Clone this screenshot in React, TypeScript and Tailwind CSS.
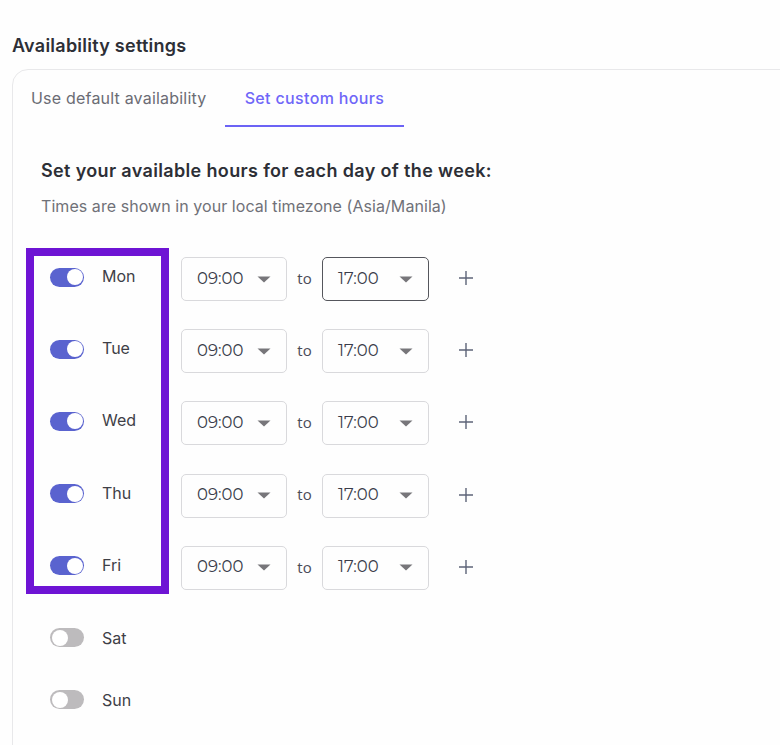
import React from "react";

function Toggle({ on }: { on: boolean }) {
  return on ? (
    <div className="flex h-[19px] w-[34px] items-center justify-end rounded-full bg-[#5a63cf] pr-[1.5px]">
      <div className="h-[16px] w-[16px] rounded-full bg-white" />
    </div>
  ) : (
    <div className="flex h-[19px] w-[34px] items-center justify-start rounded-full bg-[#bdbbbd] pl-[1.5px]">
      <div className="h-[16px] w-[16px] rounded-full bg-white" />
    </div>
  );
}

function Select({ value, focused, wide }: { value: string; focused?: boolean; wide?: boolean }) {
  return (
    <div
      className={
        "flex h-[44px] items-center justify-between rounded-[5px] border pl-[15px] pr-[15px] text-[16.5px] text-[#3a3d4a] " +
        (wide ? "w-[107px] " : "w-[106px] ") +
        (focused ? "border-[#55565c]" : "border-[#d9d9dc]")
      }
      style={{ fontFamily: '"Montserrat", "Open Sans", "Liberation Sans", sans-serif' }}
    >
      <span className="-translate-y-[1px]">{value}</span>
      <svg width="14" height="7" viewBox="0 0 14 7" className="shrink-0">
        <path d="M0.5 0.5h13L7 6.5z" fill="#77767a" />
      </svg>
    </div>
  );
}

function Plus() {
  return (
    <svg width="14" height="14" viewBox="0 0 14 14" className="ml-[30px] shrink-0 -translate-y-[1px]">
      <path d="M7 0v14M0 7h14" stroke="#5d6478" strokeWidth="1.4" />
    </svg>
  );
}

const days: { name: string; on: boolean }[] = [
  { name: "Mon", on: true },
  { name: "Tue", on: true },
  { name: "Wed", on: true },
  { name: "Thu", on: true },
  { name: "Fri", on: true },
];

export default function App() {
  return (
    <div
      className="relative h-[745px] w-[780px] overflow-hidden bg-[#fefefe] pl-3 pt-[35px]"
      style={{ fontFamily: '"Inter", "Liberation Sans", sans-serif' }}
    >
      <h2 className="text-[18px] font-semibold leading-[22px] tracking-[0.25px] text-[#2d2f36]">Availability settings</h2>
      <div className="mt-[12px] h-[800px] w-[900px] rounded-tl-2xl border border-[#e8e8ea]">
        <div className="flex h-[57px] items-stretch text-[16px]">
          <div className="flex w-[212px] items-center pb-[1px] pl-[18px] tracking-[0.2px] text-[#6b6c74]">
            Use default availability
          </div>
          <div className="flex w-[179px] items-center justify-center border-b-2 border-[#6c63f5] font-medium tracking-[0.35px] text-[#6f66f8]">
            Set custom hours
          </div>
        </div>
        <div className="pl-[28px] pt-[32px]">
          <h3 className="text-[18px] font-semibold leading-[24px] tracking-[0.35px] text-[#2d2f36]">
            Set your available hours for each day of the week:
          </h3>
          <p className="mt-[12px] text-[16px] leading-[22px] tracking-[0.06px] text-[#707178]">
            Times are shown in your local timezone (Asia/Manila)
          </p>
          <div className="mt-[40px] flex flex-col gap-[28.2px]">
            {days.map((d, i) => (
              <div key={d.name} className="flex h-[44px] items-center">
                <div className="flex w-[140px] shrink-0 -translate-y-[2px] items-center pl-[9px]">
                  <Toggle on={d.on} />
                  <span className="ml-[18px] -translate-y-[1px] text-[16px] text-[#3e3f47]">{d.name}</span>
                </div>
                <Select value="09:00" />
                <span
                  className="w-[35px] -translate-y-[1px] text-center text-[15px] text-[#4a4c58]"
                  style={{ fontFamily: '"Open Sans", sans-serif' }}
                >
                  to
                </span>
                <Select value="17:00" focused={i === 0} wide />
                <Plus />
              </div>
            ))}
          </div>
          <div className="mt-[36px] flex h-[24px] items-center pl-[9px]">
            <Toggle on={false} />
            <span className="ml-[18px] text-[16px] text-[#3e3f47]">Sat</span>
          </div>
          <div className="mt-[38px] flex h-[24px] items-center pl-[9px]">
            <Toggle on={false} />
            <span className="ml-[18px] text-[16px] text-[#3e3f47]">Sun</span>
          </div>
        </div>
      </div>
      <div className="pointer-events-none absolute left-[26px] top-[248px] h-[346px] w-[143px] border-[8px] border-[#6e14d4]" />
    </div>
  );
}
